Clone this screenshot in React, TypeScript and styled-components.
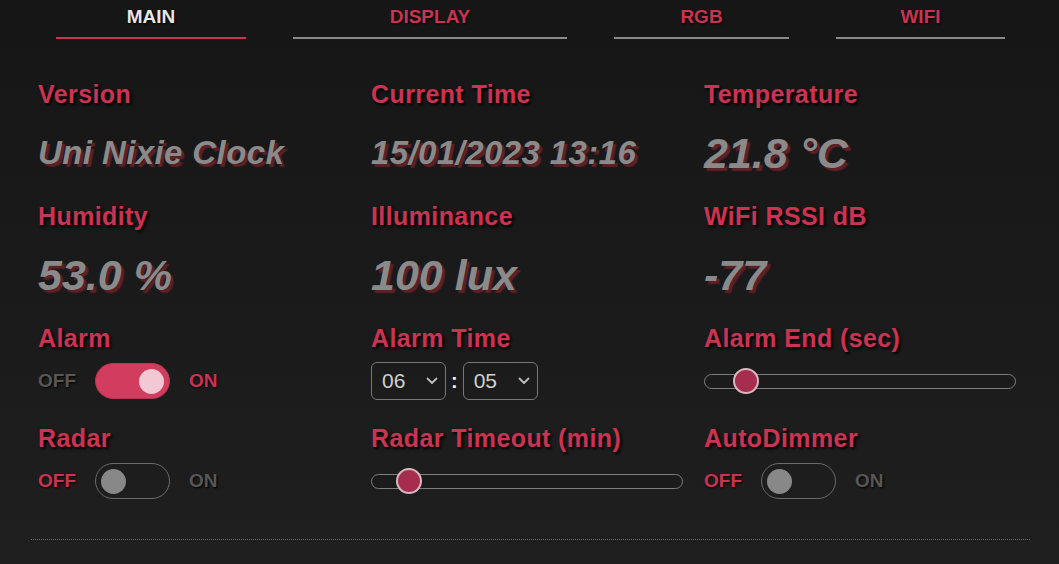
import React from "react";
import styled, { createGlobalStyle, css } from "styled-components";

const RED = "#cc3353";

const Global = createGlobalStyle`
  html, body { margin: 0; padding: 0; }
  body {
    width: 1059px;
    height: 564px;
    overflow: hidden;
    background: linear-gradient(180deg, #161616 0%, #1a1a1a 50%, #1f1f1f 100%);
    font-family: "Liberation Sans", Arial, sans-serif;
  }
`;

const Page = styled.div`
  width: 1059px;
  height: 564px;
  display: flex;
  flex-direction: column;
`;

const TabBar = styled.nav`
  display: grid;
  grid-template-columns: 190px 274px 175px 169px;
  column-gap: 47px;
  margin-left: 56px;
`;

const Tab = styled.div<{ $active?: boolean }>`
  padding: 6px 0 9px;
  line-height: 22px;
  font-size: 19px;
  font-weight: 700;
  text-align: center;
  color: ${(p) => (p.$active ? "#e6e6e6" : RED)};
  text-shadow: 1px 1px 2px #000;
  border-bottom: 2px solid ${(p) => (p.$active ? RED : "#8a8a8a")};
`;

const Grid = styled.section`
  margin: 40px 29px 0 31px;
  display: grid;
  grid-template-columns: repeat(3, 333px);
  row-gap: 23px;
`;

const Field = styled.div`
  padding-left: 7px;
  display: flex;
  flex-direction: column;
`;

const Label = styled.div`
  font-size: 25px;
  line-height: 30px;
  font-weight: 700;
  letter-spacing: 0.4px;
  color: ${RED};
  text-shadow: 2px 2px 3px #000;
  white-space: nowrap;
`;

const Value = styled.div<{ $big?: boolean }>`
  margin-top: 19px;
  height: 50px;
  line-height: 50px;
  font-size: ${(p) => (p.$big ? "43px" : "33px")};
  letter-spacing: ${(p) => (p.$big ? "0" : "0.4px")};
  font-weight: 700;
  font-style: italic;
  color: #8a8a8a;
  text-shadow: 3px 3px 1px #5e2026;
  white-space: nowrap;
`;

const Controls = styled.div`
  margin-top: 9px;
  height: 38px;
  display: flex;
  align-items: center;
`;

const ToggleRow = styled.div`
  display: flex;
  align-items: center;
  gap: 19px;
`;

const OnOff = styled.span<{ $lit?: boolean }>`
  font-size: 19px;
  font-weight: 700;
  color: ${(p) => (p.$lit ? RED : "#575757")};
  text-shadow: 1px 1px 2px #000;
`;

const Track = styled.div<{ $on?: boolean }>`
  position: relative;
  box-sizing: border-box;
  width: 75px;
  height: 36px;
  border-radius: 18px;
  ${(p) =>
    p.$on
      ? css`
          background: #d23c5e;
          border: 1px solid #b8354f;
        `
      : css`
          background: transparent;
          border: 1px solid #6a6a6a;
        `}
`;

const Knob = styled.span<{ $on?: boolean }>`
  position: absolute;
  top: 4.5px;
  width: 25px;
  height: 25px;
  border-radius: 50%;
  ${(p) =>
    p.$on
      ? css`
          right: 5px;
          background: #f3c8d5;
        `
      : css`
          left: 5px;
          background: #888888;
        `}
`;

const Toggle = ({ on }: { on: boolean }) => (
  <ToggleRow>
    <OnOff $lit={!on}>OFF</OnOff>
    <Track $on={on}>
      <Knob $on={on} />
    </Track>
    <OnOff $lit={on}>ON</OnOff>
  </ToggleRow>
);

const SliderTrack = styled.div`
  position: relative;
  box-sizing: border-box;
  width: 312px;
  height: 15px;
  border: 1px solid #7e7e7e;
  border-radius: 8px;
  background: #1b1b1b;
`;

const Thumb = styled.span`
  position: absolute;
  top: 50%;
  box-sizing: border-box;
  width: 26px;
  height: 26px;
  margin: -13px 0 0 -13px;
  border-radius: 50%;
  background: #a72d4e;
  border: 2px solid #d9b7c0;
`;

const Slider = ({ pos }: { pos: number }) => (
  <SliderTrack>
    <Thumb style={{ left: pos }} />
  </SliderTrack>
);

const TimeRow = styled.div`
  display: flex;
  align-items: center;
  gap: 5px;
`;

const Select = styled.div`
  box-sizing: border-box;
  width: 75px;
  height: 38px;
  padding: 0 7px 0 10px;
  border: 1px solid #777;
  border-radius: 6px;
  display: flex;
  align-items: center;
  justify-content: space-between;
  font-size: 21px;
  color: #d0d0d0;
`;

const Colon = styled.span`
  font-size: 20px;
  font-weight: 700;
  color: #f2f2f2;
`;

const Chevron = () => (
  <svg width="12" height="8" viewBox="0 0 12 8" fill="none">
    <path d="M1.5 1.5 L6 6 L10.5 1.5" stroke="#bdbdbd" strokeWidth="1.8" strokeLinecap="round" strokeLinejoin="round" />
  </svg>
);

const TimeSelect = ({ value }: { value: string }) => (
  <Select>
    <span>{value}</span>
    <Chevron />
  </Select>
);

const Divider = styled.hr`
  margin: 39px 29px 0 31px;
  border: 0;
  border-top: 1px dotted #6e6e6e;
  height: 0;
`;

export default function App() {
  return (
    <Page>
      <Global />
      <TabBar>
        <Tab $active>MAIN</Tab>
        <Tab>DISPLAY</Tab>
        <Tab>RGB</Tab>
        <Tab>WIFI</Tab>
      </TabBar>
      <Grid>
        <Field>
          <Label>Version</Label>
          <Value>Uni Nixie Clock</Value>
        </Field>
        <Field>
          <Label>Current Time</Label>
          <Value>15/01/2023 13:16</Value>
        </Field>
        <Field>
          <Label>Temperature</Label>
          <Value $big>21.8 °C</Value>
        </Field>

        <Field>
          <Label>Humidity</Label>
          <Value $big>53.0 %</Value>
        </Field>
        <Field>
          <Label>Illuminance</Label>
          <Value $big>100 lux</Value>
        </Field>
        <Field>
          <Label>WiFi RSSI dB</Label>
          <Value $big>-77</Value>
        </Field>

        <Field>
          <Label>Alarm</Label>
          <Controls>
            <Toggle on />
          </Controls>
        </Field>
        <Field>
          <Label>Alarm Time</Label>
          <Controls>
            <TimeRow>
              <TimeSelect value="06" />
              <Colon>:</Colon>
              <TimeSelect value="05" />
            </TimeRow>
          </Controls>
        </Field>
        <Field>
          <Label>Alarm End (sec)</Label>
          <Controls>
            <Slider pos={41} />
          </Controls>
        </Field>

        <Field>
          <Label>Radar</Label>
          <Controls>
            <Toggle on={false} />
          </Controls>
        </Field>
        <Field>
          <Label>Radar Timeout (min)</Label>
          <Controls>
            <Slider pos={37} />
          </Controls>
        </Field>
        <Field>
          <Label>AutoDimmer</Label>
          <Controls>
            <Toggle on={false} />
          </Controls>
        </Field>
      </Grid>
      <Divider />
    </Page>
  );
}
